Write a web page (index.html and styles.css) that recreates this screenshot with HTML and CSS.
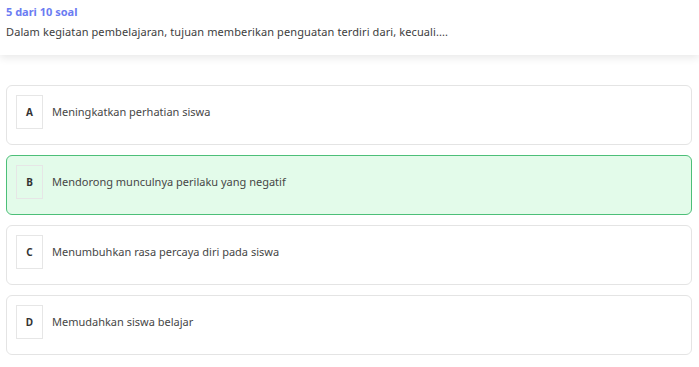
FILE: index.html
```html
<!DOCTYPE html>
<html lang="id">
<head>
  <meta charset="UTF-8" />
  <meta name="viewport" content="width=device-width, initial-scale=1.0"/>
  <title>Soal</title>
  <link rel="stylesheet" href="styles.css">
</head>
<body>

  <!-- QUESTION HEADER -->
  <div class="question-head">
    <div class="counter">5 dari 10 soal</div>
    <div class="question">Dalam kegiatan pembelajaran, tujuan memberikan penguatan terdiri dari, kecuali....</div>
  </div>

  <!-- OPTIONS -->
  <div class="options">
    <div class="option">
      <span class="letter">A</span>
      <span class="label">Meningkatkan perhatian siswa</span>
    </div>
    <div class="option selected">
      <span class="letter">B</span>
      <span class="label">Mendorong munculnya perilaku yang negatif</span>
    </div>
    <div class="option">
      <span class="letter">C</span>
      <span class="label">Menumbuhkan rasa percaya diri pada siswa</span>
    </div>
    <div class="option">
      <span class="letter">D</span>
      <span class="label">Memudahkan siswa belajar</span>
    </div>
  </div>

</body>
</html>
```

FILE: styles.css
```css
body {
  margin: 0;
  font-family: 'Noto Sans', sans-serif;
  background-color: #ffffff;
  color: #3a3a3a;
}

.question-head {
  height: 55px;
  box-sizing: border-box;
  padding: 4px 6px 0;
  background-color: #ffffff;
  box-shadow: 0 3px 8px rgba(0, 0, 0, 0.09);
}

.counter {
  font-size: 11px;
  font-weight: 700;
  color: #6b7cf2;
  line-height: 16px;
}

.question {
  margin-top: 4px;
  font-size: 11px;
  letter-spacing: 0.1px;
  line-height: 16px;
  color: #3d3d3d;
}

.options {
  display: flex;
  flex-direction: column;
  gap: 10px;
  padding: 30px 7px 0 6px;
}

.option {
  display: flex;
  align-items: flex-start;
  gap: 9px;
  height: 60px;
  box-sizing: border-box;
  padding: 9px 9px 0;
  border: 1px solid #e4e4e4;
  border-radius: 6px;
  background-color: #ffffff;
}

.option.selected {
  background-color: #e3fbea;
  border-color: #4cbf78;
}

.letter {
  width: 27px;
  height: 34px;
  flex-shrink: 0;
  box-sizing: border-box;
  border: 1px solid #e6e6e6;
  display: flex;
  align-items: center;
  justify-content: center;
  font-size: 10px;
  font-weight: 700;
  color: #333333;
}

.label {
  font-size: 11px;
  line-height: 34px;
  color: #464646;
}
```
